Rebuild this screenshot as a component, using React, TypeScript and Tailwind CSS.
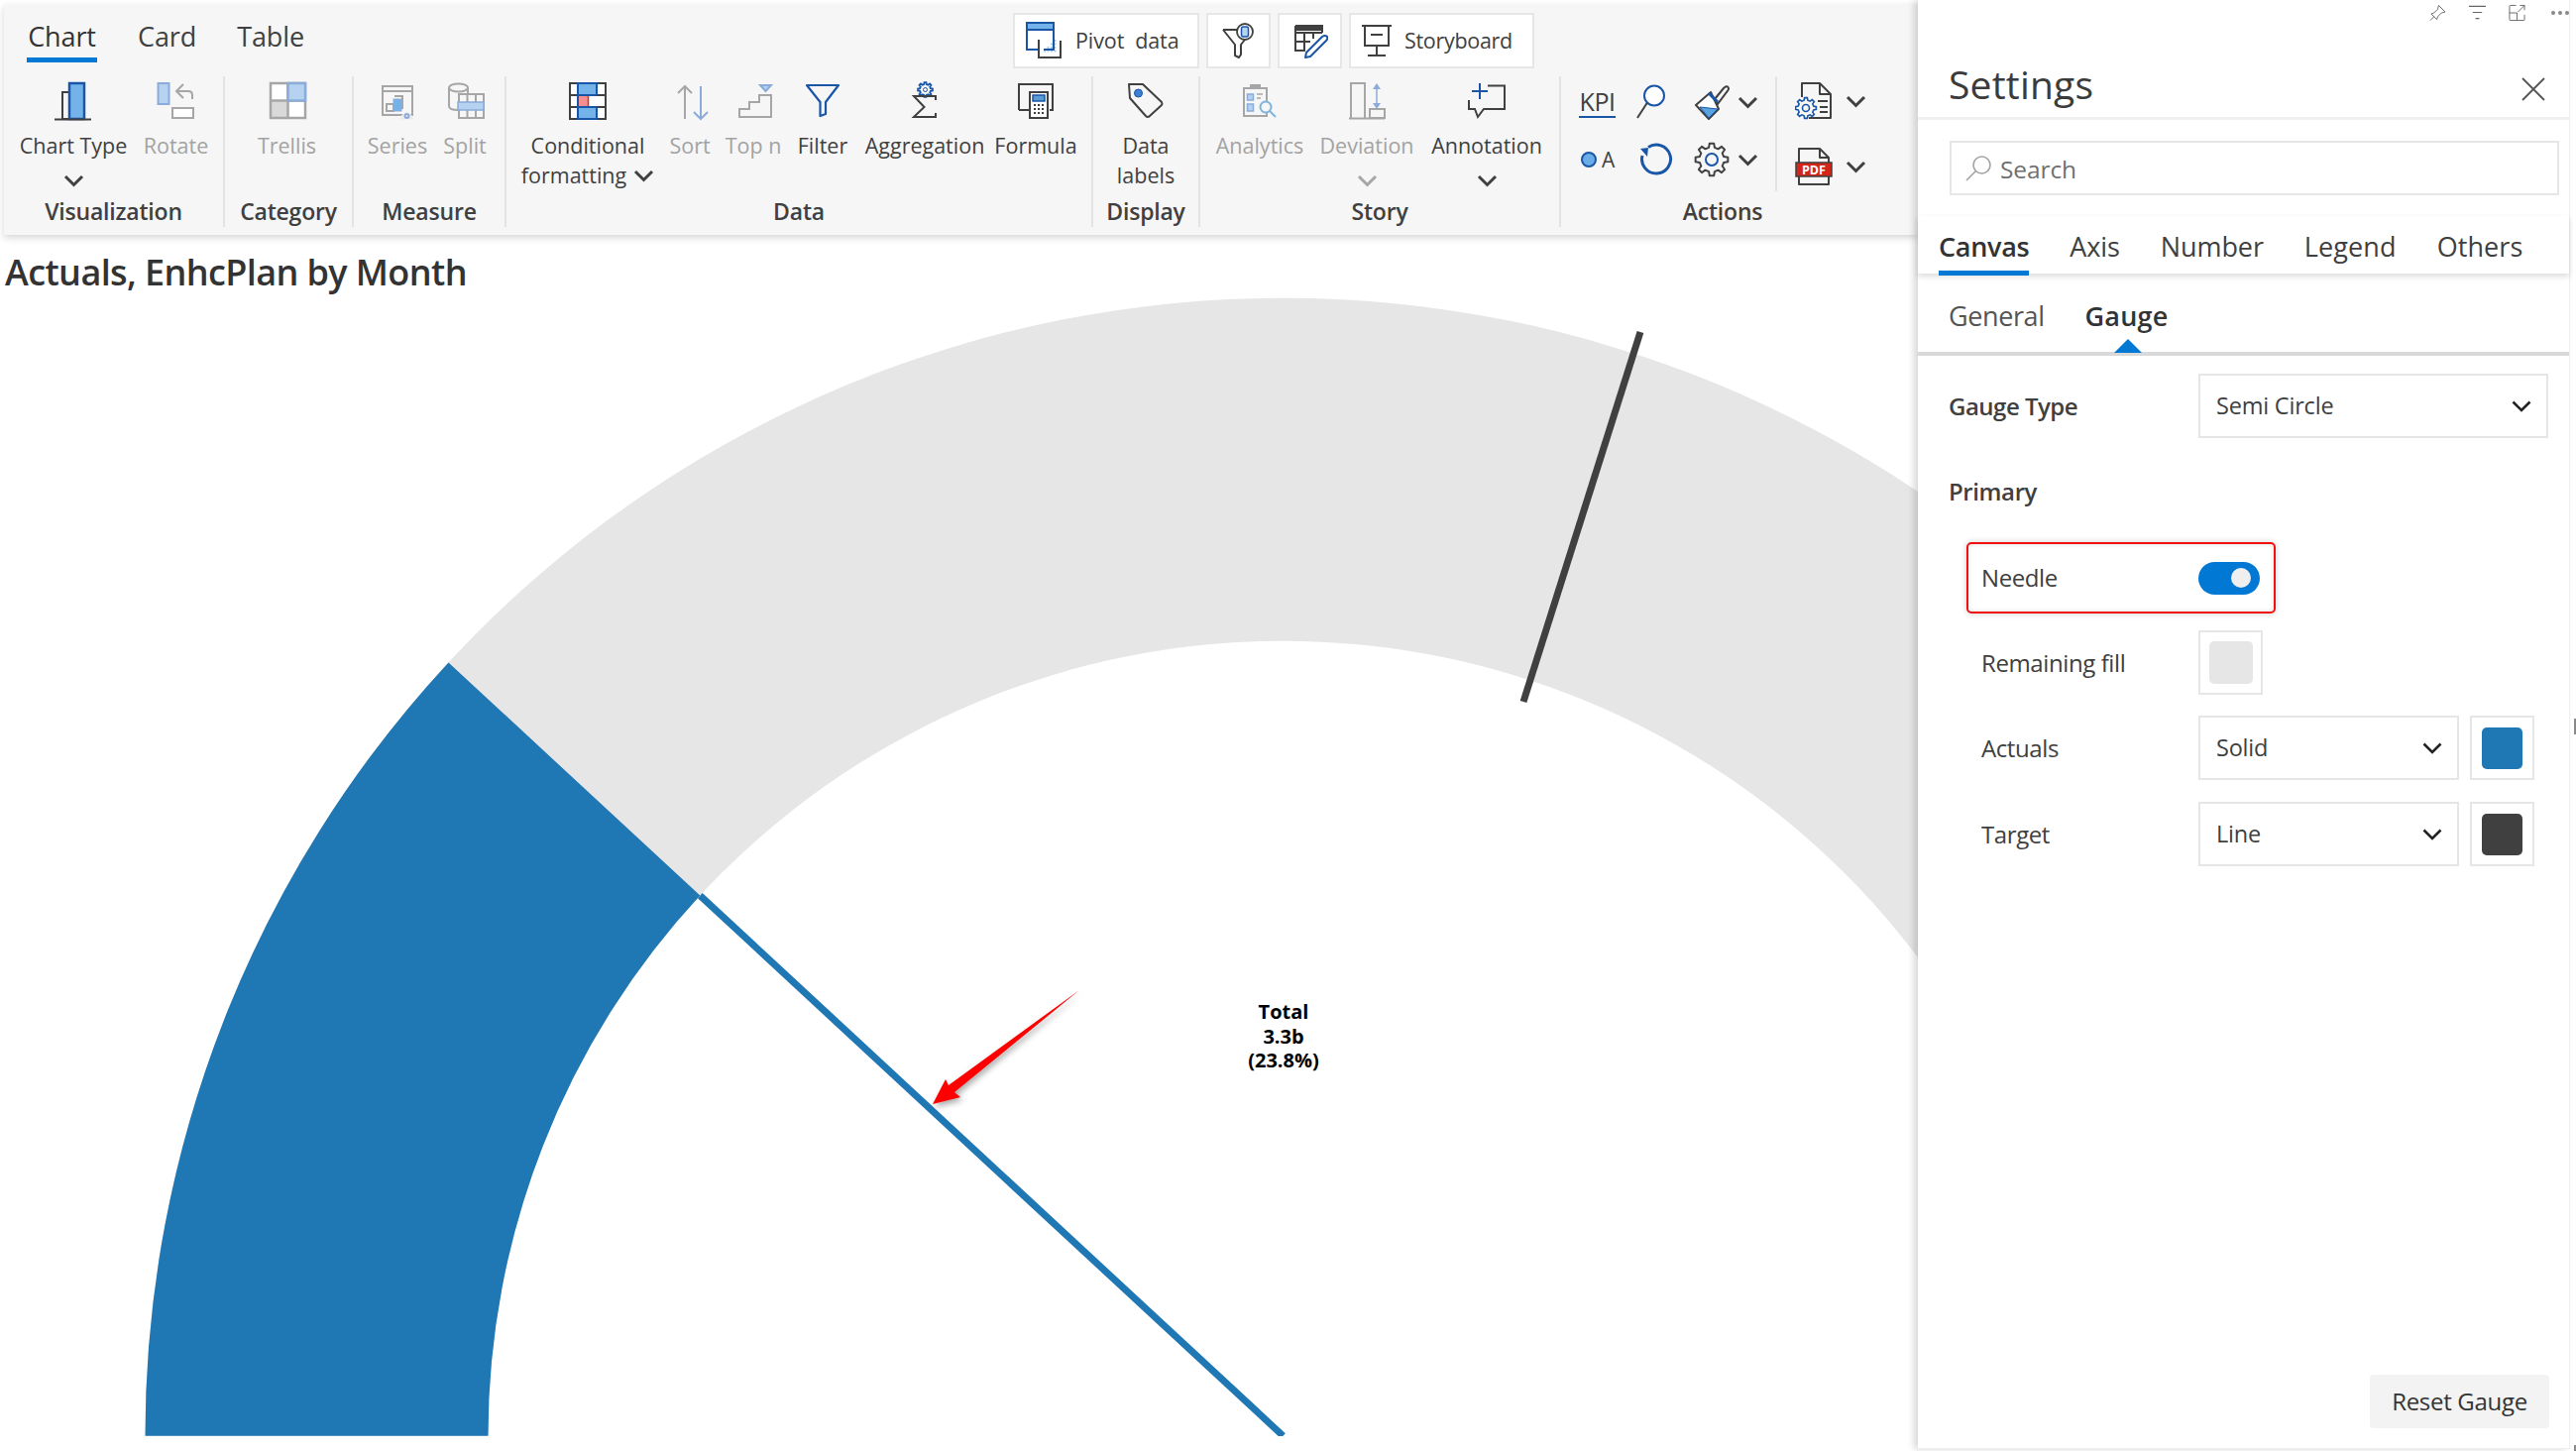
import React from "react";

const BLUE = "#1a56a8";
const LIGHT = "#74b3ea";
const DARK = "#404040";
const GREY = "#a6a6a6";
const PALE = "#8bacd9";
const PALER = "#b5d3f0";

// toothed wheel outline
const gearPath = (cx: number, cy: number, r1: number, r2: number, teeth: number) => {
  const pts: string[] = [];
  const step = (Math.PI * 2) / teeth;
  for (let i = 0; i < teeth; i++) {
    const a = i * step;
    const p = (r: number, t: number) => `${(cx + r * Math.cos(a + t * step)).toFixed(2)} ${(cy + r * Math.sin(a + t * step)).toFixed(2)}`;
    pts.push(p(r1, -0.3), p(r2, -0.17), p(r2, 0.17), p(r1, 0.3));
  }
  return "M" + pts.join(" L") + " Z";
};

const Box: React.FC<{ w?: number; h?: number; children: React.ReactNode }> = ({ w = 44, h = 44, children }) => (
  <svg width={w} height={h} viewBox={`0 0 ${w} ${h}`} fill="none" className="block shrink-0">
    {children}
  </svg>
);

const Chevron: React.FC<{ color?: string; w?: number }> = ({ color = DARK, w = 21 }) => (
  <svg width={w} height={13} viewBox="0 0 21 13" fill="none" className="block shrink-0">
    <path d="M2 2 L10.5 10.5 L19 2" stroke={color} strokeWidth={3} />
  </svg>
);

const ChartTypeIcon = () => (
  <Box>
    <rect x={11} y={13} width={7} height={27} stroke={DARK} strokeWidth={2} />
    <rect x={18} y={4} width={15} height={36} fill={LIGHT} stroke={BLUE} strokeWidth={2.5} />
    <path d="M3 40.5 H40" stroke={DARK} strokeWidth={2} />
  </Box>
);
const RotateIcon = () => (
  <Box>
    <rect x={3.5} y={4} width={11} height={21} fill={PALER} stroke={PALE} strokeWidth={2} />
    <path d="M38 20 V16 Q38 12 34 12 H23 M29 5 L22 12 L29 19" stroke={GREY} strokeWidth={2} />
    <rect x={18} y={29} width={21} height={10} stroke={GREY} strokeWidth={2} fill="#fff" />
  </Box>
);
const TrellisIcon = () => (
  <Box>
    <rect x={5} y={4} width={35} height={35} fill="#fff" />
    <rect x={5} y={21.5} width={17.5} height={17.5} fill="#d9d9d9" />
    <path d="M5 4 H40 V39 H5 Z M22.5 4 V39 M5 21.5 H40" stroke={GREY} strokeWidth={2.5} />
    <rect x={22.5} y={4} width={17.5} height={17.5} fill={PALER} stroke={PALE} strokeWidth={2.5} />
  </Box>
);
const SeriesIcon = () => (
  <Box>
    <path d="M7 7 H37 V36 H7 Z M7 12 H37" stroke={GREY} strokeWidth={2} />
    <path d="M27 30 V17 H19" stroke={GREY} strokeWidth={2} />
    <rect x={11} y={25} width={7} height={7} stroke={GREY} strokeWidth={2} />
    <rect x={18} y={20} width={8} height={12} fill={LIGHT} stroke={PALE} strokeWidth={1} />
    <path d="M23 41 Q31 28 40 41 Z" fill="#ebebeb" stroke="#f6f6f6" strokeWidth={1} />
    <circle cx={31.5} cy={37} r={2} stroke={PALE} strokeWidth={2} />
  </Box>
);
const SplitIcon = () => (
  <Box>
    <path d="M6 9 V27 Q6 31 15 31 M25 9 V14" stroke={GREY} strokeWidth={2} />
    <ellipse cx={15.5} cy={8.5} rx={9.5} ry={4} stroke={GREY} strokeWidth={2} />
    <rect x={16} y={15} width={25} height={24} fill="#f6f6f6" stroke={GREY} strokeWidth={2} />
    <path d="M24.5 15 V39 M33 15 V39" stroke={GREY} strokeWidth={2} />
    <rect x={15} y={23} width={26} height={8} fill={PALER} stroke={PALE} strokeWidth={1.5} />
  </Box>
);
const CondIcon = () => (
  <Box>
    <rect x={12} y={4} width={19} height={12} fill={LIGHT} />
    <rect x={12} y={28} width={19} height={12} fill={LIGHT} />
    <rect x={4} y={16} width={36} height={12} fill="#fff" />
    <rect x={4} y={4} width={8} height={12} fill="#fff" />
    <rect x={31} y={4} width={9} height={12} fill="#fff" />
    <rect x={4} y={28} width={8} height={12} fill="#fff" />
    <rect x={31} y={28} width={9} height={12} fill="#fff" />
    <rect x={13} y={17} width={9} height={10} fill="#f58e8e" />
    <path d="M22.5 17 V27" stroke="#d9302a" strokeWidth={1.5} />
    <path d="M4 4 H40 V40 H4 Z M4 16 H40 M4 28 H40" stroke={DARK} strokeWidth={2} />
    <path d="M12 3 V41 M31 3 V16 M31 28 V41" stroke={BLUE} strokeWidth={2} />
    <path d="M12 4 H31 M12 16 H31 M12 28 H31 M12 40 H31" stroke={BLUE} strokeWidth={2} />
  </Box>
);
const SortIcon = () => (
  <Box>
    <path d="M17 40 V7 M10 14 L17 7 L24 14" stroke={GREY} strokeWidth={2} />
    <path d="M33 7 V40 M26 33 L33 40 L40 33" stroke={PALE} strokeWidth={2} />
  </Box>
);
const TopNIcon = () => (
  <Box>
    <path d="M29 6 H40 L34.5 12 Z" fill={PALER} stroke={PALE} strokeWidth={2} />
    <path d="M8 38 V30 H18 V23 H28 V16 H40 V38 Z" fill="#f6f6f6" stroke={GREY} strokeWidth={2} />
  </Box>
);
const FilterIcon = () => (
  <Box>
    <path d="M6 6 H38 L25 23 V35 L19.5 37 V23 Z" stroke={BLUE} strokeWidth={2.2} strokeLinejoin="round" />
  </Box>
);
const AggregationIcon = () => (
  <Box>
    <path d={gearPath(22.5, 10.5, 5.5, 7.5, 8)} stroke={BLUE} strokeWidth={1.8} fill="#f6f6f6" />
    <circle cx={22.5} cy={10.5} r={2} fill="#f6f6f6" stroke={BLUE} strokeWidth={1} />
    <path d="M33 21 V17 H11 L21.5 28 L11 38 H33 V34" stroke={DARK} strokeWidth={2} />
  </Box>
);
const FormulaIcon = () => (
  <Box>
    <path d="M5 31 V5 H39 V31 H36 M15 31 H5" stroke={DARK} strokeWidth={2} />
    <rect x={16} y={13} width={18} height={26} fill="#fff" stroke={DARK} strokeWidth={2} />
    <rect x={19} y={16} width={12} height={6} fill="#5b9bd5" stroke={BLUE} strokeWidth={1.5} />
    <path d="M20 26 H22 M24 26 H26 M28 26 H30 M20 30 H22 M24 30 H26 M28 30 H30 M20 34 H22 M24 34 H26 M28 34 H30" stroke={DARK} strokeWidth={2} />
  </Box>
);
const TagIcon = () => (
  <Box>
    <path d="M5 5 H19 L38 23 Q39 25 38 26 L26 37 Q24 39 22 37 L6 19 Z" stroke={DARK} strokeWidth={2} strokeLinejoin="round" />
    <circle cx={14.5} cy={14} r={4} fill="#3d7fd0" stroke={BLUE} strokeWidth={1} />
  </Box>
);
const AnalyticsIcon = () => (
  <Box>
    <rect x={6} y={9} width={23} height={28} fill="#f6f6f6" stroke={GREY} strokeWidth={2} />
    <rect x={12} y={5} width={11} height={5} fill={GREY} />
    <rect x={9.5} y={15} width={6} height={6} fill={PALER} stroke={PALE} strokeWidth={1.5} />
    <rect x={9.5} y={25} width={6} height={7} fill={PALER} stroke={PALE} strokeWidth={1.5} />
    <path d="M19 15 H25 M19 19 H23" stroke={GREY} strokeWidth={1.5} />
    <circle cx={28} cy={28} r={5.5} fill="#f6f6f6" stroke="#7db4dc" strokeWidth={2} />
    <path d="M32 32 L38 38" stroke="#7db4dc" strokeWidth={2} />
  </Box>
);
const DeviationIcon = () => (
  <Box>
    <path d="M6 39 V4 H20 V39" stroke={GREY} strokeWidth={2} />
    <path d="M4 39.5 H40" stroke={GREY} strokeWidth={2} />
    <rect x={25} y={30} width={15} height={9} stroke={GREY} strokeWidth={2} />
    <path d="M32 8 V26" stroke={PALE} strokeWidth={1.5} />
    <path d="M28 10 L32 4 L36 10 Z M28 24 L32 30 L36 24 Z" fill={PALE} />
  </Box>
);
const AnnotationIcon = () => (
  <Box>
    <path d="M15 4 V20 M7 12 H23" stroke={BLUE} strokeWidth={2} />
    <path d="M23 6.5 H40 V30 H19 L13 38 L10 30 H4 V21" stroke={DARK} strokeWidth={2} />
  </Box>
);

const PivotIcon = () => (
  <Box w={38} h={38}>
    <g fill="#a9cdf0">
      {[0, 1, 2, 3].map((r) =>
        [0, 1, 2, 3].filter((c) => c + r >= 3).map((c) => <rect key={`${r}${c}`} x={18 + c * 3.5} y={18 + r * 3.5} width={2} height={2} />)
      )}
    </g>
    <rect x={1} y={1} width={27} height={27} stroke={BLUE} strokeWidth={2} fill="none" />
    <rect x={1} y={1} width={27} height={7} fill={LIGHT} stroke={BLUE} strokeWidth={2} />
    <path d="M13 18 V36 H35 V19" stroke={DARK} strokeWidth={2} />
    <rect x={14} y={27} width={4} height={2} fill="#fff" />
  </Box>
);
const FunnelDbIcon = () => (
  <Box w={36} h={36}>
    <path d="M2 7 H16 M2 7 L14 22 V33 L18 35 L20 32 V22 L24 17" stroke={DARK} strokeWidth={2} strokeLinejoin="round" />
    <circle cx={24} cy={9} r={8} fill="#fff" stroke={DARK} strokeWidth={1.8} />
    <rect x={20.5} y={4} width={7} height={10} rx={2} fill={PALER} stroke={BLUE} strokeWidth={1.5} />
  </Box>
);
const TableEditIcon = () => (
  <Box w={36} h={36}>
    <path d="M3 3 H30 V10 M3 3 V28 H13 M3 10 H30 M3 19 H18 M12 10 V28 M21 10 V16" stroke={DARK} strokeWidth={2} />
    <path d="M3 3 H30 V8 H3 Z" fill={DARK} />
    <path d="M14 30 L30 14 Q33 12 35 14 Q36 16 34 18 L18 34 L13 35 Z" fill="#fff" stroke={BLUE} strokeWidth={2} strokeLinejoin="round" />
  </Box>
);
const BoardIcon = () => (
  <Box w={32} h={34}>
    <path d="M1 2 H31 M4 2 V22 H28 V2 M10 11 H22 M16 22 V32 M7 32 H25" stroke={DARK} strokeWidth={2} />
  </Box>
);

const MagnifierIcon = () => (
  <Box w={36} h={36}>
    <circle cx={18} cy={11.5} r={10} fill="#fff" stroke={BLUE} strokeWidth={2} />
    <path d="M11 18.5 L1 34" stroke={DARK} strokeWidth={2} />
  </Box>
);
const BrushIcon = () => (
  <Box w={36} h={36}>
    <path d="M2 21 L17 8 L25 25 L15 35 Z" fill="#fff" stroke={DARK} strokeWidth={2} strokeLinejoin="round" />
    <path d="M6 23 L24 25 L15 34 Z" fill="#5aa3e0" stroke={BLUE} strokeWidth={1} />
    <path d="M21 15 L30 4 Q33 1 34.5 3 Q36 5 33 8 L24 20 Z" fill="#f6f6f6" stroke={DARK} strokeWidth={2} />
    <path d="M15 9 L24 18" stroke={BLUE} strokeWidth={3} />
  </Box>
);
const RefreshIcon = () => (
  <Box w={34} h={34}>
    <path d="M9 4.5 A14.5 14.5 0 1 1 3 13" stroke={BLUE} strokeWidth={3} />
    <path d="M1 6 L9 5 L8 14 Z" fill={BLUE} />
  </Box>
);
const GearIcon = () => (
  <Box w={36} h={36}>
    <path d={gearPath(18, 18, 12.5, 16.5, 8)} stroke={DARK} strokeWidth={2} strokeLinejoin="round" />
    <circle cx={18} cy={18} r={6} stroke={BLUE} strokeWidth={2} />
  </Box>
);
const DocGearIcon = () => (
  <Box w={38} h={38}>
    <path d="M7 15 V1 H25 L36 12 V36 H14 M25 1 V12 H36" stroke={DARK} strokeWidth={2} strokeLinejoin="round" />
    <path d="M23 19 H33 M25 25 H33 M25 30 H33" stroke={DARK} strokeWidth={2} />
    <path d={gearPath(11, 26, 8, 10.5, 8)} fill="#f6f6f6" stroke={BLUE} strokeWidth={1.6} />
    <circle cx={11} cy={26} r={3.5} stroke={BLUE} strokeWidth={1.6} />
  </Box>
);
const PdfIcon = () => (
  <Box w={38} h={38}>
    <path d="M4 16 V1 H25 L34 10 V16 M25 1 V10 H34 M4 29 V37 H34 V29" stroke={DARK} strokeWidth={2} strokeLinejoin="round" fill="none" />
    <rect x={1} y={15} width={36} height={14} fill="#d32518" stroke={DARK} strokeWidth={1.5} />
    <text x={19} y={26.5} textAnchor="middle" fontSize={12.5} fontWeight={700} fill="#fff" fontFamily="'Open Sans',sans-serif">PDF</text>
  </Box>
);

const PinIcon = () => (
  <svg width={18} height={18} viewBox="0 0 18 18" fill="none" className="block">
    <path d="M10 1 L17 8 L13 9 L9 13 L8 16 L2 10 L5 9 L9 5 Z M5 13 L1 17" stroke="#666" strokeWidth={1} />
  </svg>
);
const LinesIcon = () => (
  <svg width={18} height={18} viewBox="0 0 18 18" fill="none" className="block">
    <path d="M0 2 H18 M4 8.5 H14 M7 15 H11" stroke="#666" strokeWidth={1.2} />
  </svg>
);
const ExpandIcon = () => (
  <svg width={18} height={18} viewBox="0 0 18 18" fill="none" className="block">
    <path d="M8 1 H2 Q1 1 1 2 V16 Q1 17 2 17 H16 Q17 17 17 16 V11 M1 9 H9 V17 M10 8 L17 1 M12 1 H17 V6" stroke="#666" strokeWidth={1} />
  </svg>
);

const RibbonButton: React.FC<{
  icon: React.ReactNode;
  lines: string[];
  width: string;
  disabled?: boolean;
  chevron?: boolean;
  inlineChevron?: boolean;
}> = ({ icon, lines, width, disabled, chevron, inlineChevron }) => (
  <div className={`${width} flex flex-col items-center pt-[3px] shrink-0 ${disabled ? "text-[#a3a3a3]" : "text-[#404040]"}`}>
    {icon}
    <div className="mt-[8px] text-[21.5px] leading-[30px] text-center whitespace-nowrap">
      {lines.map((l, i) => (
        <div key={l} className="flex items-center justify-center gap-[7px]">
          {l}
          {inlineChevron && i === lines.length - 1 && <Chevron />}
        </div>
      ))}
    </div>
    {chevron && (
      <div className="mt-[14px]">
        <Chevron color={disabled ? GREY : DARK} />
      </div>
    )}
  </div>
);

const Group: React.FC<{ label: string; width: string; pad?: string; last?: boolean; labelPad?: string; children: React.ReactNode }> = ({
  label,
  width,
  pad = "",
  last,
  labelPad = "",
  children,
}) => (
  <div className={`${width} h-[152px] flex flex-col shrink-0 ${last ? "" : "border-r-2 border-[#e3e3e3]"}`}>
    <div className={`h-[120px] flex ${pad}`}>{children}</div>
    <div className={`h-[32px] leading-[32px] text-center text-[23px] font-semibold text-[#404040] tracking-[-0.2px] ${labelPad}`}>{label}</div>
  </div>
);

const Select: React.FC<{ value: string; width: string }> = ({ value, width }) => (
  <div className={`${width} h-[65px] border-2 border-[#e6e6e6] bg-white flex items-center justify-between pl-[16px] pr-[15px] shrink-0`}>
    <span className="text-[23.5px] text-[#404040] tracking-[-0.2px]">{value}</span>
    <svg width={20} height={12} viewBox="0 0 20 12" fill="none" className="block">
      <path d="M1.5 1.5 L10 10 L18.5 1.5" stroke="#222" strokeWidth={2.6} />
    </svg>
  </div>
);

const Swatch: React.FC<{ color: string; inner: string }> = ({ color, inner }) => (
  <div className="w-[65px] h-[65px] border-2 border-[#e6e6e6] flex items-center justify-center shrink-0">
    <div className={`${inner} ${color} rounded-[5px]`} />
  </div>
);

export default function App() {
  return (
    <div className="w-[2599px] h-[1464px] bg-white flex overflow-hidden font-['Open_Sans',sans-serif] text-[#333]">
      {/* Left: ribbon and gauge */}
      <div className="w-[1935px] h-[1464px] shrink-0 flex flex-col">
        <div className="ml-[4px] mt-[4px] h-[233px] bg-[#f6f6f6] shadow-[0_3px_7px_rgba(0,0,0,0.16)] flex flex-col shrink-0 relative">
          <div className="h-[73px] flex shrink-0">
            <div className="w-[1018px] pl-[23px] pt-[13px] flex gap-[41px]">
              <div className="flex flex-col items-center">
                <span className="text-[27px] leading-[40px] font-medium text-[#333] tracking-[-0.1px]">Chart</span>
                <span className="mt-[1px] w-[71px] h-[5px] bg-[#0078d4]" />
              </div>
              <span className="text-[27px] leading-[40px] text-[#404040] tracking-[-0.1px]">Card</span>
              <span className="text-[27px] leading-[40px] text-[#404040] tracking-[-0.1px]">Table</span>
            </div>
            <div className="mt-[9px] h-[56px] flex gap-[7px]">
              <div className="w-[188px] h-full border-2 border-[#e6e6e6] bg-white flex items-center pl-[11px] gap-[12px]">
                <PivotIcon />
                <span className="text-[21.5px] text-[#404040] whitespace-pre tracking-[-0.1px]">Pivot  data</span>
              </div>
              <div className="w-[65px] h-full border-2 border-[#e6e6e6] bg-white flex items-center justify-center">
                <FunnelDbIcon />
              </div>
              <div className="w-[65px] h-full border-2 border-[#e6e6e6] bg-white flex items-center justify-center">
                <TableEditIcon />
              </div>
              <div className="w-[187px] h-full border-2 border-[#e6e6e6] bg-white flex items-center pl-[10px] gap-[12px]">
                <BoardIcon />
                <span className="text-[21.5px] text-[#404040] tracking-[-0.3px]">Storyboard</span>
              </div>
            </div>
          </div>
          <div className="flex">
            <Group label="Visualization" width="w-[223px]" pad="pl-[10px]">
              <RibbonButton icon={<ChartTypeIcon />} lines={["Chart Type"]} width="w-[120px]" chevron />
              <RibbonButton icon={<RotateIcon />} lines={["Rotate"]} width="w-[87px]" disabled />
            </Group>
            <Group label="Category" width="w-[130px]" pad="pr-[3px] justify-center">
              <RibbonButton icon={<TrellisIcon />} lines={["Trellis"]} width="w-[100px]" disabled />
            </Group>
            <Group label="Measure" width="w-[154px]" pad="pl-[4px]">
              <RibbonButton icon={<SeriesIcon />} lines={["Series"]} width="w-[80px]" disabled />
              <RibbonButton icon={<SplitIcon />} lines={["Split"]} width="w-[56px]" disabled />
            </Group>
            <Group label="Data" width="w-[592px]" pad="pl-[17px]">
              <RibbonButton icon={<CondIcon />} lines={["Conditional", "formatting"]} width="w-[130px]" inlineChevron />
              <RibbonButton icon={<SortIcon />} lines={["Sort"]} width="w-[76px]" disabled />
              <RibbonButton icon={<TopNIcon />} lines={["Top n"]} width="w-[52px]" disabled />
              <RibbonButton icon={<FilterIcon />} lines={["Filter"]} width="w-[88px]" />
              <RibbonButton icon={<AggregationIcon />} lines={["Aggregation"]} width="w-[118px]" />
              <RibbonButton icon={<FormulaIcon />} lines={["Formula"]} width="w-[106px]" />
            </Group>
            <Group label="Display" width="w-[108px]" pad="justify-center">
              <RibbonButton icon={<TagIcon />} lines={["Data", "labels"]} width="w-[100px]" />
            </Group>
            <Group label="Story" width="w-[364px]" pad="pl-[4px]">
              <RibbonButton icon={<AnalyticsIcon />} lines={["Analytics"]} width="w-[112px]" disabled />
              <RibbonButton icon={<DeviationIcon />} lines={["Deviation"]} width="w-[104px]" disabled chevron />
              <RibbonButton icon={<AnnotationIcon />} lines={["Annotation"]} width="w-[138px]" chevron />
            </Group>
            <Group label="Actions" width="w-[360px]" last labelPad="pr-[34px]">
              <div className="w-[218px] h-[116px] pt-[6px] pl-[18px] flex flex-col gap-[18px] border-r-2 border-[#e3e3e3] shrink-0">
                <div className="h-[40px] flex items-center">
                  <div className="w-[58px]">
                    <span className="block w-[37px] border-b-2 border-[#1a56a8] text-[25px] leading-[30px] font-medium text-[#404040] text-center tracking-[-0.5px]">KPI</span>
                  </div>
                  <div className="w-[58px]">
                    <MagnifierIcon />
                  </div>
                  <div className="w-[44px]">
                    <BrushIcon />
                  </div>
                  <Chevron />
                </div>
                <div className="h-[40px] flex items-center">
                  <div className="w-[58px] flex items-center gap-[5px] pl-[2px]">
                    <span className="w-[16px] h-[16px] rounded-full bg-[#6aace6] border-2 border-[#1a56a8]" />
                    <span className="text-[21px] font-medium text-[#404040] leading-none">A</span>
                  </div>
                  <div className="w-[58px] pl-[3px]">
                    <RefreshIcon />
                  </div>
                  <div className="w-[44px]">
                    <GearIcon />
                  </div>
                  <Chevron />
                </div>
              </div>
              <div className="pl-[18px] pt-[6px] flex flex-col gap-[28px]">
                <div className="h-[38px] flex items-center gap-[13px]">
                  <DocGearIcon />
                  <Chevron />
                </div>
                <div className="h-[38px] flex items-center gap-[13px]">
                  <PdfIcon />
                  <Chevron />
                </div>
              </div>
            </Group>
          </div>
        </div>

        <div className="h-[63px] pt-[14px] pl-[5px] shrink-0 text-[36px] leading-[48px] font-semibold text-[#333] tracking-[-0.6px] whitespace-nowrap">
          Actuals, EnhcPlan by Month
        </div>

        <div className="relative flex-1 min-h-0">
          <svg width={1935} height={1164} viewBox="0 300 1935 1164" fill="none" className="block">
            <defs>
              <clipPath id="gauge-clip">
                <rect x={0} y={300} width={1935} height={1149} />
              </clipPath>
            </defs>
            <g clipPath="url(#gauge-clip)">
              <path d="M146.5 1448.7 A1148 1148 0 0 1 2442.5 1448.7 L2096.5 1448.7 A802 802 0 0 0 492.5 1448.7 Z" fill="#e6e6e6" />
              <path d="M146.5 1448.7 A1148 1148 0 0 1 452.5 668.4 L706.3 903.6 A802 802 0 0 0 492.5 1448.7 Z" fill="#1f77b4" />
              <path d="M706.3 903.6 L1294.5 1448.7" stroke="#1f77b4" strokeWidth={7} />
              <path d="M1655 335 L1537 708" stroke="#404040" strokeWidth={7} />
            </g>
            <polygon
              points="1089,999 957,1095 954,1089 941,1114 969,1107 963,1102"
              fill="#ff0000"
              className="drop-shadow-[2px_3px_3px_rgba(0,0,0,0.35)]"
            />
          </svg>
          <div className="absolute left-[1195px] top-[709px] w-[200px] text-center text-[20px] leading-[24.5px] font-bold text-black">
            <div>Total</div>
            <div>3.3b</div>
            <div>(23.8%)</div>
          </div>
        </div>
      </div>

      {/* Right: settings panel */}
      <div className="w-[658px] h-[1462px] shrink-0 bg-white relative border-r border-b border-[#efefef] shadow-[-4px_0_7px_rgba(0,0,0,0.16)] flex flex-col">
        <div className="h-[24px] flex items-center shrink-0 pl-[516px] gap-[23px] pt-[2px]">
          <PinIcon />
          <LinesIcon />
          <ExpandIcon />
          <div className="flex gap-[3px] ml-[3px]">
            <span className="w-[4px] h-[4px] rounded-full bg-[#888]" />
            <span className="w-[4px] h-[4px] rounded-full bg-[#888]" />
            <span className="w-[4px] h-[4px] rounded-full bg-[#888]" />
          </div>
        </div>
        <div className="h-[97px] shrink-0 border-b-[3px] border-[#f0f0f0] flex items-start justify-between pl-[31px] pr-[24px]">
          <span className="mt-[34px] text-[39px] leading-[54px] text-[#3b3b3b] tracking-[0.2px]">Settings</span>
          <svg width={24} height={24} viewBox="0 0 24 24" fill="none" className="block mt-[54px]">
            <path d="M1 1 L23 23 M23 1 L1 23" stroke="#555" strokeWidth={1.8} />
          </svg>
        </div>
        <div className="mt-[21px] ml-[32px] w-[615px] h-[55px] shrink-0 border-2 border-[#e6e6e6] flex items-center pl-[14px] gap-[9px]">
          <svg width={26} height={26} viewBox="0 0 26 26" fill="none" className="block">
            <circle cx={16.5} cy={9.5} r={8.5} stroke="#a3a3a3" strokeWidth={1.6} />
            <path d="M10.5 15.5 L1 25" stroke="#a3a3a3" strokeWidth={1.6} />
          </svg>
          <span className="text-[24.5px] leading-[34px] mt-[2px] text-[#707070] tracking-[-0.1px]">Search</span>
        </div>
        <div className="mt-[21px] h-[58px] shrink-0 bg-white shadow-[0_3px_6px_rgba(0,0,0,0.14)] flex items-center pl-[21px] pt-[5px] gap-[41px] relative">
          <span className="relative text-[27px] font-semibold text-[#333] tracking-[-0.3px]">
            Canvas
            <span className="absolute left-0 right-0 top-[44px] h-[5px] bg-[#0078d4]" />
          </span>
          <span className="text-[27px] text-[#404040] tracking-[-0.1px]">Axis</span>
          <span className="text-[27px] text-[#404040] tracking-[-0.1px]">Number</span>
          <span className="text-[27px] text-[#404040] tracking-[0.1px]">Legend</span>
          <span className="text-[27px] text-[#404040] tracking-[0.1px]">Others</span>
        </div>
        <div className="h-[83px] shrink-0 border-b-4 border-[#d9d9d9] flex items-start pl-[31px] pt-[24px] gap-[41px] relative">
          <span className="text-[27px] leading-[38px] text-[#555] tracking-[-0.4px]">General</span>
          <span className="text-[27px] leading-[38px] font-semibold text-[#333] tracking-[0.2px]">Gauge</span>
          <svg width={28} height={14} viewBox="0 0 28 14" className="absolute left-[198px] top-[66px]">
            <path d="M14 0 L28 14 H0 Z" fill="#0078d4" />
          </svg>
        </div>

        <div className="mt-[18px] pl-[31px] h-[65px] flex items-center shrink-0">
          <span className="w-[252px] text-[24px] font-semibold text-[#404040] tracking-[-0.5px]">Gauge Type</span>
          <Select value="Semi Circle" width="w-[353px]" />
        </div>
        <div className="mt-[36px] pl-[31px] h-[36px] leading-[36px] text-[24px] font-semibold text-[#404040] tracking-[-0.4px] shrink-0">Primary</div>

        <div className="mt-[33px] ml-[49px] w-[312px] h-[72px] shrink-0 border-2 border-[#f01010] rounded-[5px] shadow-[0_0_6px_rgba(0,0,0,0.2),inset_0_0_5px_rgba(0,0,0,0.12)] flex items-center pl-[13px]">
          <span className="w-[219px] text-[24px] text-[#404040] tracking-[-0.4px]">Needle</span>
          <div className="w-[62px] h-[33px] rounded-full bg-[#0078d4] flex items-center justify-end pr-[9px]">
            <span className="w-[20px] h-[20px] rounded-full bg-[#efefef]" />
          </div>
        </div>
        <div className="mt-[17px] pl-[64px] flex items-center shrink-0">
          <span className="w-[219px] text-[24px] text-[#404040] tracking-[-0.4px]">Remaining fill</span>
          <Swatch color="bg-[#e6e6e6]" inner="w-[44px] h-[43px]" />
        </div>
        <div className="mt-[21px] pl-[64px] flex items-center shrink-0">
          <span className="w-[219px] text-[24px] text-[#404040] tracking-[-0.4px]">Actuals</span>
          <Select value="Solid" width="w-[263px]" />
          <div className="ml-[11px]">
            <Swatch color="bg-[#1f77b4]" inner="w-[41px] h-[42px]" />
          </div>
        </div>
        <div className="mt-[22px] pl-[64px] flex items-center shrink-0">
          <span className="w-[219px] text-[24px] text-[#404040] tracking-[-0.4px]">Target</span>
          <Select value="Line" width="w-[263px]" />
          <div className="ml-[11px]">
            <Swatch color="bg-[#404040]" inner="w-[41px] h-[42px]" />
          </div>
        </div>

        <div className="mt-auto mb-[20px] mr-[20px] self-end w-[181px] h-[54px] rounded-[4px] bg-[#f3f3f3] flex items-center justify-center text-[24px] text-[#333] tracking-[-0.3px]">
          Reset Gauge
        </div>
      </div>

      {/* Page scrollbar handles at the far right */}
      <div className="flex-1 h-[1464px] flex flex-col items-end pt-[725px]">
        <span className="w-[2px] h-[16px] bg-[#8a8a8a]" />
        <span className="mt-auto w-[2px] h-[6px] bg-[#8a8a8a]" />
      </div>
    </div>
  );
}
